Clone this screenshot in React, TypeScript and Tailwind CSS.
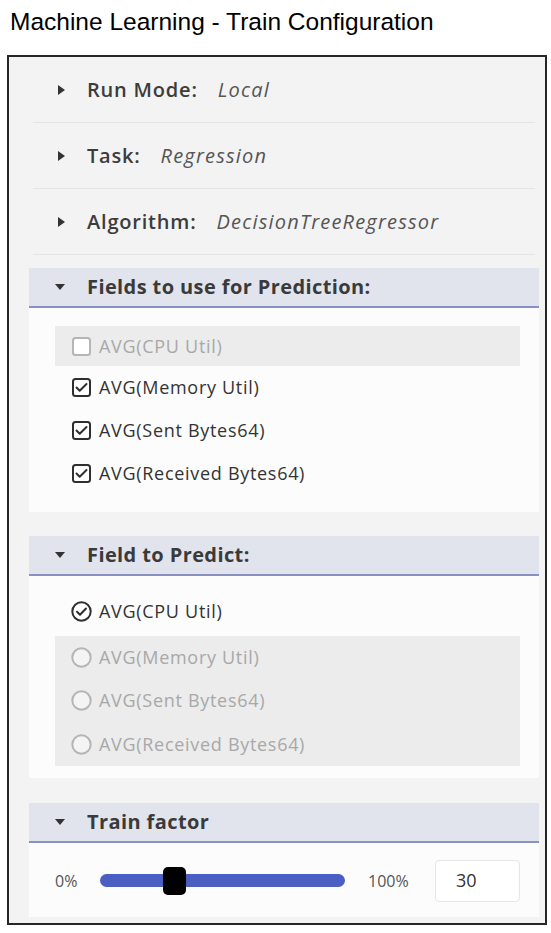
import React from "react";

const FONT = { fontFamily: '"Open Sans", "DejaVu Sans", sans-serif' };

function Caret({ open }: { open?: boolean }) {
  return open ? (
    <svg width="10" height="6" viewBox="0 0 10 6" className="shrink-0">
      <path d="M0 0h10L5 6z" fill="#333" />
    </svg>
  ) : (
    <svg width="7" height="10" viewBox="0 0 7 10" className="shrink-0">
      <path d="M0 0l7 5-7 5z" fill="#333" />
    </svg>
  );
}

function Checkbox({ checked, disabled }: { checked?: boolean; disabled?: boolean }) {
  const c = disabled ? "#b5b5b5" : "#2f2f2f";
  return (
    <svg width="19" height="19" viewBox="0 0 19 19" className="shrink-0">
      <rect x="1" y="1" width="17" height="17" rx="2.5" fill="white" stroke={c} strokeWidth="2" />
      {checked && <path d="M4.5 9.5l3.2 3.2L14.5 6" fill="none" stroke={c} strokeWidth="2" strokeLinecap="round" strokeLinejoin="round" />}
    </svg>
  );
}

function Radio({ checked, disabled }: { checked?: boolean; disabled?: boolean }) {
  const c = disabled ? "#b5b5b5" : "#2f2f2f";
  return (
    <svg width="21" height="21" viewBox="0 0 21 21" className="shrink-0">
      <circle cx="10.5" cy="10.5" r="9.2" fill={disabled ? "#f4f4f4" : "white"} stroke={c} strokeWidth="2" />
      {checked && <path d="M6 10.8l3 3 6-6.3" fill="none" stroke={c} strokeWidth="2" strokeLinecap="round" strokeLinejoin="round" />}
    </svg>
  );
}

function InfoRow({ label, value }: { label: string; value: string }) {
  return (
    <div className="mx-1 flex h-[66px] items-center border-b border-[#e4e4e4] pl-[25px]">
      <Caret />
      <span className="ml-[22px] text-[20px] font-semibold tracking-[0.8px] text-[#3c3c3c]">{label}</span>
      <span className="ml-[20px] text-[20px] italic tracking-[1.2px] text-[#555]">{value}</span>
    </div>
  );
}

function Header({ title }: { title: string }) {
  return (
    <div className="flex h-[40px] items-center border-b-2 border-[#8b90c2] bg-[#e2e4ed] pl-[26px]">
      <Caret open />
      <span className="ml-[22px] text-[20px] font-bold tracking-[0.4px] text-[#3a3a3a]">{title}</span>
    </div>
  );
}

const fields = ["AVG(CPU Util)", "AVG(Memory Util)", "AVG(Sent Bytes64)", "AVG(Received Bytes64)"];

export default function App() {
  return (
    <div className="min-h-[933px] bg-white">
      <div className="pl-[10px] pt-[8px] text-[24.5px] leading-[28px] text-black" style={{ fontFamily: '"Liberation Sans", Arial, sans-serif' }}>
        Machine Learning - Train Configuration
      </div>

      <div className="ml-[7px] mt-[19px] w-[540px] border-2 border-[#262626] bg-[#f3f3f3] pl-5 pr-[6px] pb-[6px]" style={FONT}>
        <InfoRow label="Run Mode:" value="Local" />
        <InfoRow label="Task:" value="Regression" />
        <InfoRow label="Algorithm:" value="DecisionTreeRegressor" />

        <div className="mt-[13px]">
          <Header title="Fields to use for Prediction:" />
          <div className="bg-[#fcfcfc] pb-[17px] pl-[26px] pr-[19px] pt-[18px]">
            <div className="flex h-[40px] items-center gap-[8px] bg-[#ececec] pl-[17px]">
              <Checkbox disabled />
              <span className="text-[18px] tracking-[0.7px] text-[#a8a8a8]">{fields[0]}</span>
            </div>
            {fields.slice(1).map((f) => (
              <div key={f} className="flex h-[43px] items-center gap-[8px] pl-[17px]">
                <Checkbox checked />
                <span className="text-[18px] tracking-[0.7px] text-[#333]">{f}</span>
              </div>
            ))}
          </div>
        </div>

        <div className="mt-[24px]">
          <Header title="Field to Predict:" />
          <div className="bg-[#fcfcfc] pb-[12px] pl-[26px] pr-[19px] pt-[14px]">
            <div className="flex h-[43px] items-center gap-[7px] pl-[16px]">
              <Radio checked />
              <span className="text-[18px] tracking-[0.7px] text-[#333]">{fields[0]}</span>
            </div>
            <div className="mt-[3px] bg-[#ececec]">
              {fields.slice(1).map((f) => (
                <div key={f} className="flex h-[43.3px] items-center gap-[7px] pl-[16px]">
                  <Radio disabled />
                  <span className="text-[18px] tracking-[0.7px] text-[#a8a8a8]">{f}</span>
                </div>
              ))}
            </div>
          </div>
        </div>

        <div className="mt-[25px]">
          <Header title="Train factor" />
          <div className="flex items-center bg-[#fcfcfc] pb-[15px] pl-[26px] pr-[19px] pt-[17px]">
            <span className="w-[22px] text-[16px] text-[#555]">0%</span>
            <div className="relative ml-[23px] h-[13px] w-[245px] rounded-full bg-[#4b5fc2]">
              <div className="absolute left-[63px] top-1/2 h-[28px] w-[23px] -translate-y-1/2 rounded-[5px] bg-black" />
            </div>
            <span className="ml-[23px] text-[16px] text-[#555]">100%</span>
            <div className="ml-auto flex h-[42px] w-[85px] items-center rounded-[4px] border border-[#e6e6e6] bg-white pl-[20px] text-[18px] text-[#333]">
              30
            </div>
          </div>
        </div>
      </div>
    </div>
  );
}
